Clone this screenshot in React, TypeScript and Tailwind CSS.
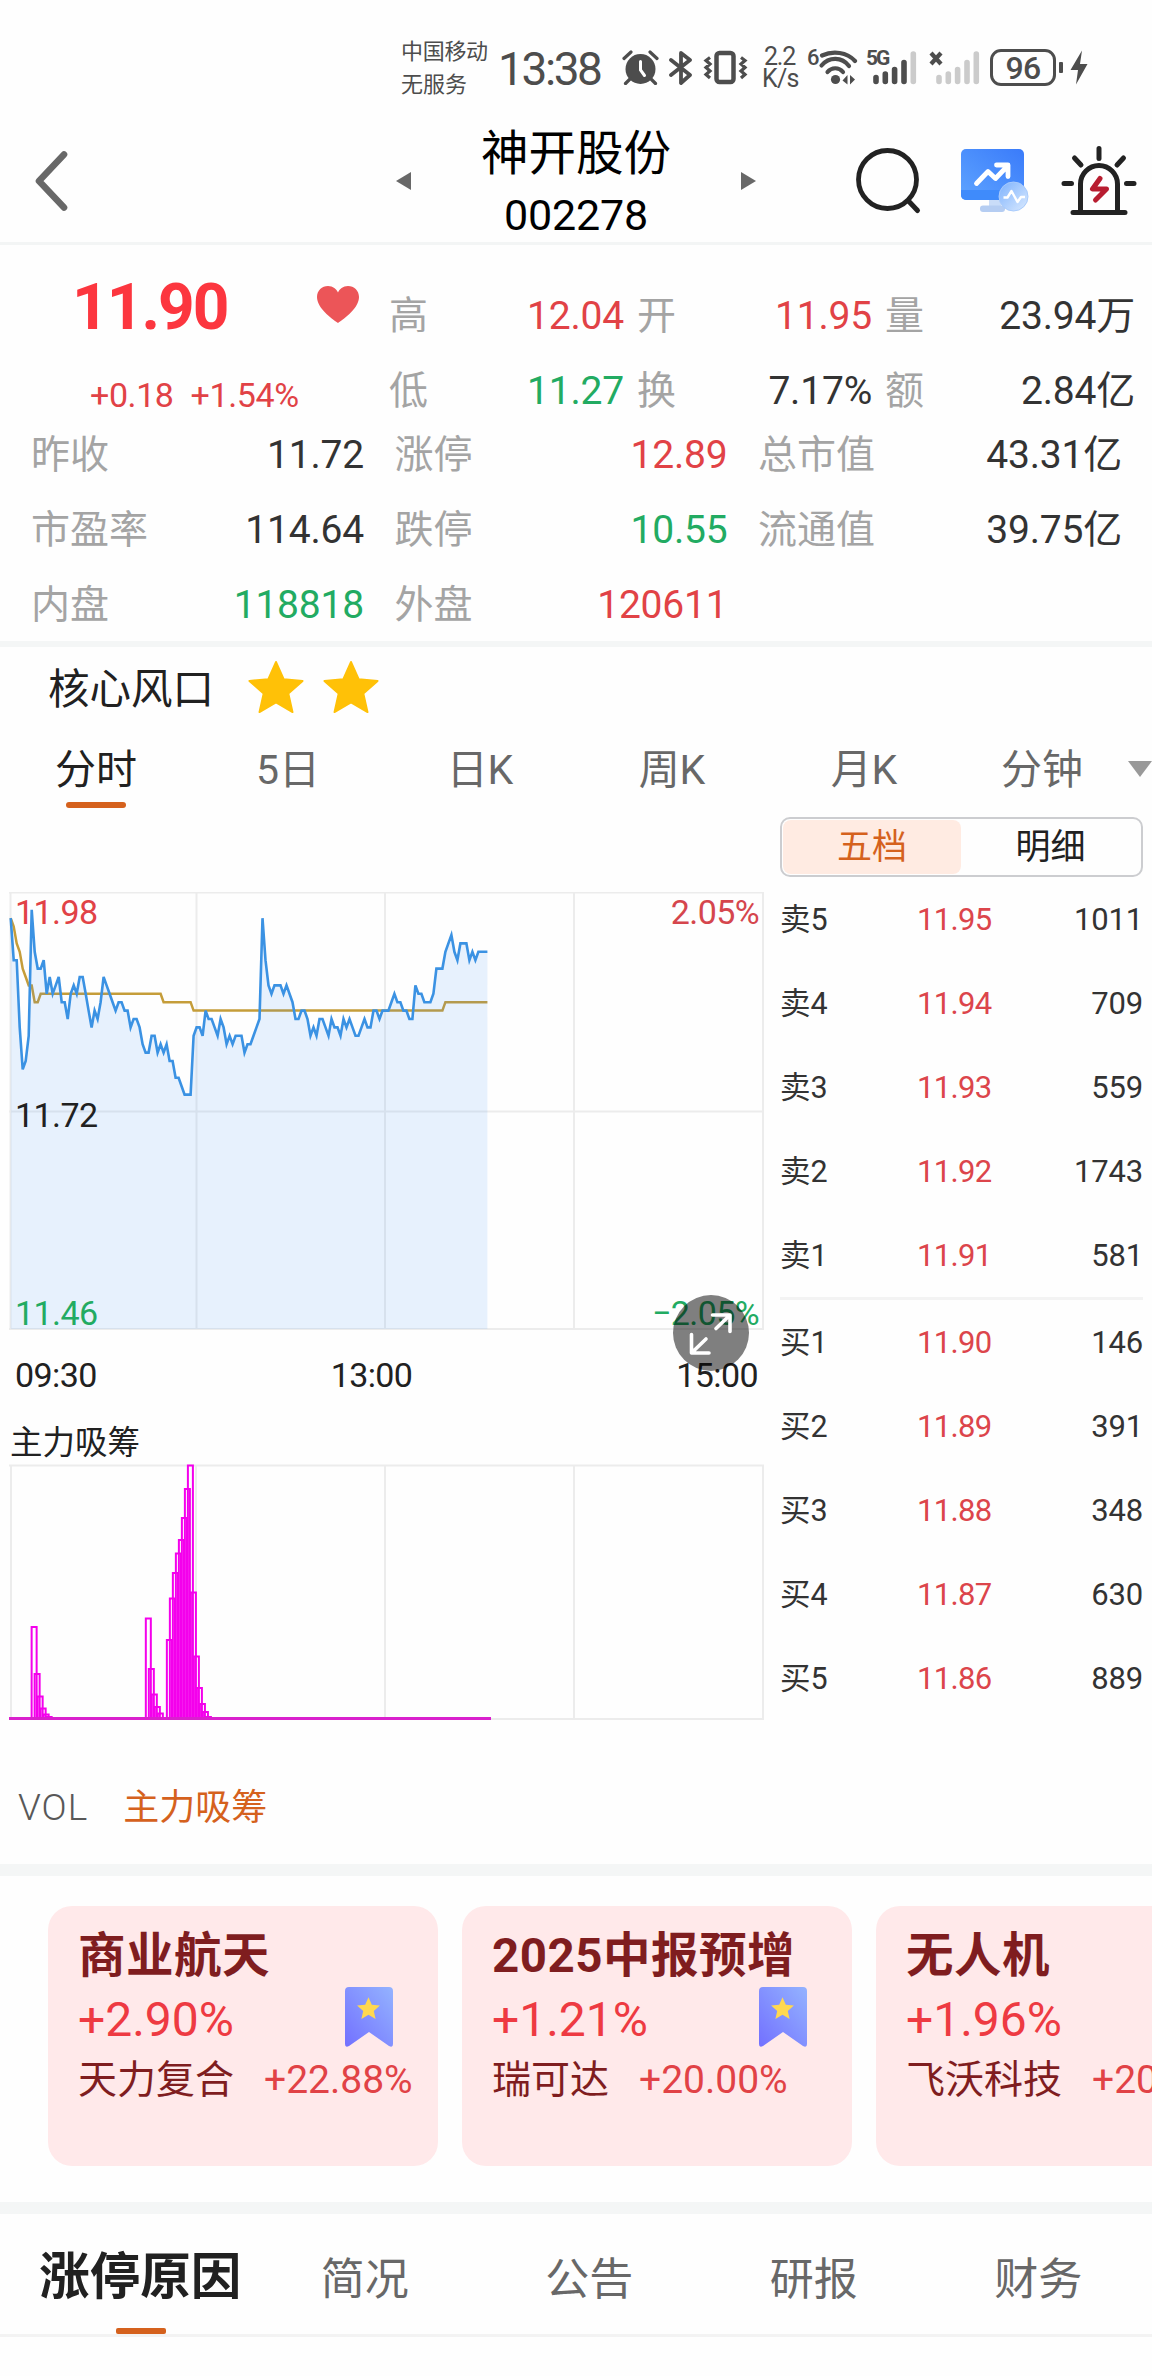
import { clsx } from 'clsx';

// ticks (0.01) below the upper limit of the chart, one entry per minute
const PRICE = [
  3, 8, 8, 16, 21, 20, 17, 2, 7, 9, 9, 8, 12, 10, 12, 11, 10, 13, 13, 15, 12, 11, 12, 10, 10, 12, 14, 16, 14, 15, 13, 10,
  11, 12, 13, 14, 13, 13, 14, 14, 16, 15, 15, 16, 18, 19, 19, 17, 17, 19, 18, 19, 18, 20, 20, 22, 22, 23, 24, 24, 24, 17,
  16, 16, 17, 14, 15, 15, 16, 17, 15, 16, 18, 17, 18, 17, 17, 17, 19, 18, 18, 17, 16, 15, 3, 8, 11, 12, 11, 11, 11, 12,
  11, 12, 13, 15, 15, 14, 14, 15, 17, 16, 17, 15, 15, 16, 17, 15, 16, 16, 17, 15, 16, 15, 16, 17, 17, 16, 15, 16, 16, 14,
  14, 15, 14, 14, 14, 13, 12, 13, 13, 14, 14, 15, 15, 11, 12, 12, 13, 13, 13, 12, 9, 9, 9, 7, 6, 5, 7, 8, 6, 6, 6, 8, 7,
  8, 7, 7, 7, 7,
];

// [minute, ticks]
const AVERAGE = [
  [0, 3], [1, 4], [2, 6], [3, 7], [4, 9], [5, 10], [6, 11], [7, 11], [8, 13], [9, 13], [10, 12],
  [50, 12], [51, 13], [60, 13], [61, 14], [144, 14], [145, 13], [159, 13],
];

const STEP = 2.998;
const px = (i: number) => 1.7 + i * STEP;
const py = (d: number) => 1 + d * 8.4;

// [minute, height]
const INFLOW = [
  [7, 92], [8, 45], [9, 22.5], [10, 10.5], [11, 4.5], [12, 2],
  [45, 100.5], [46, 50], [47, 24.5], [48, 12], [49, 5.5],
  [52, 79], [53, 120.5], [54, 146], [55, 165.5], [56, 179], [57, 201], [58, 230], [59, 253.5],
  [60, 126.5], [61, 62.5], [62, 31], [63, 15], [64, 7], [65, 2],
];

const topStats = [
  { label: '高', value: '12.04', color: 'text-[#e14246]' },
  { label: '开', value: '11.95', color: 'text-[#e14246]' },
  { label: '量', value: '23.94万', color: 'text-[#333333]' },
  { label: '低', value: '11.27', color: 'text-[#22ab62]' },
  { label: '换', value: '7.17%', color: 'text-[#333333]' },
  { label: '额', value: '2.84亿', color: 'text-[#333333]' },
];

const stats = [
  { label: '昨收', value: '11.72', color: 'text-[#333333]' },
  { label: '涨停', value: '12.89', color: 'text-[#e14246]' },
  { label: '总市值', value: '43.31亿', color: 'text-[#333333]' },
  { label: '市盈率', value: '114.64', color: 'text-[#333333]' },
  { label: '跌停', value: '10.55', color: 'text-[#22ab62]' },
  { label: '流通值', value: '39.75亿', color: 'text-[#333333]' },
  { label: '内盘', value: '118818', color: 'text-[#22ab62]' },
  { label: '外盘', value: '120611', color: 'text-[#e14246]' },
];

const asks = [
  ['卖5', '11.95', '1011'],
  ['卖4', '11.94', '709'],
  ['卖3', '11.93', '559'],
  ['卖2', '11.92', '1743'],
  ['卖1', '11.91', '581'],
];

const bids = [
  ['买1', '11.90', '146'],
  ['买2', '11.89', '391'],
  ['买3', '11.88', '348'],
  ['买4', '11.87', '630'],
  ['买5', '11.86', '889'],
];

const concepts = [
  { name: '商业航天', change: '+2.90%', stock: '天力复合', stockChange: '+22.88%' },
  { name: '2025中报预增', change: '+1.21%', stock: '瑞可达', stockChange: '+20.00%' },
  { name: '无人机', change: '+1.96%', stock: '飞沃科技', stockChange: '+20.00%' },
];

const STAR = 'M12 0.8l3.3 7.4 8.1.8-6.1 5.4 1.8 8L12 18.2l-7.1 4.2 1.8-8L.6 9l8.1-.8z';

const StatusBar = () => (
  <div className="flex h-[100px] text-[#4d4d4d]">
    <div className="ml-[401px] w-[97px] pt-[35px] text-[22px] leading-[33px]">
      <p className="tracking-[-0.3px]">中国移动</p>
      <p>无服务</p>
    </div>
    <div className="w-[124px] pt-[43px] text-[46px] leading-[52px] tracking-[-2.4px]">13:38</div>
    <svg className="mt-[50px] h-[35px] w-[37px]" viewBox="0 0 37 35">
      <circle cx="18.5" cy="19" r="15" fill="#4d4d4d" />
      <path d="M2 8.500L9 2M35 8.500L28 2M8 29l-4.500 4.500M29 29l4.500 4.500" stroke="#4d4d4d" strokeWidth="3.200" strokeLinecap="round" />
      <path d="M18.500 11.500v8.500l4 5.500" stroke="#fff" strokeWidth="3" fill="none" strokeLinecap="round" />
    </svg>
    <svg className="mt-[50px] ml-[9px] h-[35px] w-[26px]" viewBox="0 0 26 35" fill="none" stroke="#4d4d4d" strokeWidth="3.800" strokeLinejoin="round" strokeLinecap="round">
      <path d="M3 10l19 15-9 8V3l9 7L3 25" />
    </svg>
    <svg className="mt-[50px] ml-[9px] h-[35px] w-[46px]" viewBox="0 0 46 35" fill="none" stroke="#4d4d4d">
      <rect x="13.500" y="3" width="17" height="29" rx="3" strokeWidth="4.500" />
      <path d="M7 7.500L3 10.500 7 14 3 17.500 7 21 3 24.500 7 28M38 7.500l4 3-4 3.500 4 3.500-4 3.500 4 3.500-4 3.500" strokeWidth="3.200" />
    </svg>
    <div className="ml-[13px] w-[45px] pt-[46px] text-[25px] leading-[22px]">
      <p className="pl-[2px] tracking-[-1.2px]">2.2</p>
      <p className="tracking-[-0.8px]">K/s</p>
    </div>
    <span className="w-[11px] pt-[47px] text-[22px] leading-[21px] font-medium tracking-[-1px]">6</span>
    <svg className="mt-[50px] h-[36px] w-[40px]" viewBox="0 0 40 36" fill="none" stroke="#4d4d4d" strokeWidth="4.200" strokeLinecap="round">
      <path d="M4 5.500C15 .500 29 2 37 11" />
      <path d="M3.500 15.500C11 6.500 24 6.500 31 16" />
      <path d="M9.500 22C13.500 17 21 17 25 22" />
      <circle cx="17.500" cy="29.500" r="4.600" fill="#4d4d4d" stroke="none" />
      <path d="M29.500 25v9.500l-5-4zM32 34.500V25l5 4.500z" fill="#4d4d4d" stroke="none" />
    </svg>
    <span className="ml-[8px] w-[7px] pt-[48px] text-[21px] leading-[21px] font-bold tracking-[-2px]">5G</span>
    <svg className="mt-[50px] h-[35px] w-[44px]" viewBox="0 0 44 35" strokeWidth="5.600" strokeLinecap="round">
      <path d="M3 27.500v4M12.300 24v7.500M21.600 19.500v12M31 12.500v19" stroke="#4d4d4d" />
      <path d="M40.300 4v27.500" stroke="#cbcbcb" />
    </svg>
    <svg className="mt-[50px] ml-[12px] h-[35px] w-[51px]" viewBox="0 0 51 35" strokeWidth="5.600" strokeLinecap="round">
      <path d="M2 3l10 11M12 3L2 14" stroke="#4d4d4d" strokeWidth="4.200" strokeLinecap="butt" />
      <path d="M10 27.500v4M19.300 24v7.500M28.600 19.500v12M38 12.500v19M47.300 4v27.500" stroke="#cbcbcb" />
    </svg>
    <div className="mt-[49px] ml-[10px] flex h-[37px] w-[66px] items-center justify-center rounded-[11px] border-[3px] border-[#4d4d4d] text-[32px] leading-[32px] font-medium tracking-[-0.8px]">
      96
    </div>
    <div className="mt-[62px] ml-[3px] h-[11px] w-[4px] rounded-[1px] bg-[#4d4d4d]" />
    <svg className="mt-[50px] ml-[7px] h-[35px] w-[18px]" viewBox="0 0 18 35">
      <path d="M12 .500L.500 20H8l-2 14.500L17.500 14H10z" fill="#4d4d4d" />
    </svg>
  </div>
);

const NavBar = () => (
  <div className="flex h-[145px] border-b-[3px] border-[#f3f5f5]">
    <svg className="mt-[48px] ml-[33px] h-[66px] w-[38px]" viewBox="0 0 38 66">
      <path d="M31 6.500L6 33l25 26.500" fill="none" stroke="#686868" strokeWidth="6.600" strokeLinecap="round" strokeLinejoin="round" />
    </svg>
    <svg className="mt-[72px] ml-[325px] h-[18px] w-[15px]" viewBox="0 0 15 18">
      <path d="M15 0v18L0 9z" fill="#686868" />
    </svg>
    <div className="ml-[11px] w-[308px] pt-[23px] text-center text-black">
      <h1 className="text-[47.500px] leading-[62px]">神开股份</h1>
      <p className="text-[43px] leading-[60px] tracking-[-0.2px]">002278</p>
    </div>
    <svg className="mt-[72px] ml-[11px] h-[18px] w-[15px]" viewBox="0 0 15 18">
      <path d="M0 0v18l15-9z" fill="#686868" />
    </svg>
    <svg className="mt-[45px] ml-[97px] h-[70px] w-[70px]" viewBox="0 0 70 70" fill="none" stroke="#222" strokeLinecap="round">
      <circle cx="34.500" cy="34.500" r="29" strokeWidth="4.800" />
      <path d="M55.500 56l9 9.500" strokeWidth="5" />
    </svg>
    <svg className="mt-[47px] ml-[36px] h-[68px] w-[70px]" viewBox="0 0 70 68">
      <defs>
        <linearGradient id="screen" x1="0" y1="1" x2="1" y2="0">
          <stop offset="0" stopColor="#5ea4ff" />
          <stop offset="1" stopColor="#3a7bfa" />
        </linearGradient>
        <linearGradient id="bubble" x1="0" y1="0" x2="1" y2="1">
          <stop offset="0" stopColor="#7db2fd" />
          <stop offset="1" stopColor="#dbeafe" />
        </linearGradient>
      </defs>
      <path d="M30 52h12v9H30z" fill="#c9dcf8" />
      <rect x="21" y="58.500" width="25" height="6.500" rx="3" fill="#b5cdf2" />
      <rect x="2" y="2" width="63" height="51" rx="5" fill="url(#screen)" />
      <path d="M2 43h63v5a5 5 0 0 1-5 5H7a5 5 0 0 1-5-5z" fill="#3f8bfb" />
      <path d="M17.500 36.500l11.500-12 7.500 7L49 18.500M37.500 18H49v11.500" fill="none" stroke="#fff" strokeWidth="4.800" strokeLinejoin="round" strokeLinecap="round" />
      <circle cx="54.500" cy="49.500" r="14.500" fill="url(#bubble)" stroke="#a9cbfc" strokeWidth="1" />
      <path d="M44.500 50.500h4l4-6.500 6 11 3.500-5h4" fill="none" stroke="#fff" strokeWidth="2.400" strokeLinejoin="round" />
    </svg>
    <svg className="mt-[43px] ml-[32px] h-[74px] w-[76px]" viewBox="0 0 76 74" fill="none" stroke="#222" strokeWidth="5" strokeLinecap="round">
      <path d="M19.500 68V41a18.500 18.500 0 0 1 37 0v27" />
      <path d="M12 69.500h52M38 5.500v10M13.500 15l6.500 7M62.500 15L56 22M3 40.500h7.500M65.500 40.500H73" />
      <path d="M39 35.500l-7.500 10.500h14L34.500 57" stroke="#b81d30" strokeWidth="5" strokeLinejoin="round" />
    </svg>
  </div>
);

const StatCell = ({ label, value, color }: { label: string; value: string; color: string }) => (
  <div className="flex h-[50px] justify-between text-[39px] leading-[50px]">
    <span className="text-[#a4a4a4]">{label}</span>
    <span className={clsx('tracking-[-0.2px]', color)}>{value}</span>
  </div>
);

const Quote = () => (
  <section className="h-[402px] border-b-[6px] border-[#f4f6f6]">
    <div className="flex h-[171px]">
      <div className="w-[389px] pt-[29px]">
        <div className="flex">
          <p className="w-[242px] pl-[72px] text-[64px] leading-[68px] font-bold tracking-[-2px] text-[#fc363f]">11.90</p>
          <svg className="mt-[11px] ml-[74px] h-[39px] w-[44px]" viewBox="0 0 44 39">
            <path d="M22 38C15 33 1 23 1 12 1 5.500 6 1 12 1c5 0 8.500 3 10 6.500C23.500 4 27 1 32 1c6 0 11 4.500 11 11 0 11-14 21-21 26z" fill="#ec5558" />
          </svg>
        </div>
        <p className="flex gap-[17px] pt-[27px] pl-[90px] text-[34px] leading-[52px] tracking-[-0.4px] text-[#e14246]">
          <span>+0.18</span>
          <span>+1.54%</span>
        </p>
      </div>
      <div className="grid grid-cols-[235px_235px_250px] gap-x-[13px] gap-y-[25px] self-start pt-[46px]">
        {topStats.map((s) => (
          <StatCell key={s.label} {...s} />
        ))}
      </div>
    </div>
    <div className="mt-[14px] grid grid-cols-[333px_333px_364px] gap-x-[30.500px] gap-y-[25px] pl-[31px]">
      {stats.map((s) => (
        <StatCell key={s.label} {...s} />
      ))}
    </div>
  </section>
);

const CoreTheme = () => (
  <div className="flex h-[82px] pt-[13px] pl-[48px]">
    <span className="w-[200px] text-[41.500px] leading-[60px] text-[#212121]">核心风口</span>
    {[0, 1].map((i) => (
      <svg key={i} className="mr-[19px] h-[54px] w-[56px]" viewBox="0 0 24 23.200" preserveAspectRatio="none">
        <path d={STAR} fill="#ffc107" stroke="#ffc107" strokeWidth="0.800" strokeLinejoin="round" />
      </svg>
    ))}
  </div>
);

const PeriodTabs = () => (
  <div className="flex h-[88px] text-[41px] leading-[60px] text-[#686868]">
    <div className="flex w-[192px] flex-col items-center pt-[11px] text-[#212121]">
      <span>分时</span>
      <div className="mt-[2px] h-[6px] w-[60px] rounded-full bg-[#d5611d]" />
    </div>
    {['5日', '日K', '周K', '月K'].map((t) => (
      <div key={t} className="w-[192px] pt-[11px] text-center">{t}</div>
    ))}
    <div className="w-[168px] pt-[11px] pl-[41px]">分钟</div>
    <svg className="mt-[32px] h-[16px] w-[24px]" viewBox="0 0 24 16">
      <path d="M0 0h24L12 16z" fill="#999" />
    </svg>
  </div>
);

const PriceChart = () => {
  const line = PRICE.map((d, i) => `${px(i).toFixed(1)},${py(d).toFixed(1)}`).join(' ');
  const average = AVERAGE.map(([i, d]) => `${px(i).toFixed(1)},${py(d).toFixed(1)}`).join(' ');

  return (
    <div className="relative mt-[75px] ml-[9px] h-[438px] w-[756px] text-[34px] leading-[40px] tracking-[-0.6px]">
      <svg className="h-[438px] w-[756px]" viewBox="0 0 756 438" fill="none">
        <path d="M0 .500h755M0 219.500h755M0 437h755M1.500 0v437M187.500 0v437M376 0v437M565 0v437M754 0v437" stroke="#ececec" strokeWidth="2" />
        <polyline points={average} stroke="#c59d3a" strokeWidth="2.500" />
        <polygon points={`1.7,437 ${line} ${px(159)},437`} fill="#2b8cf5" fillOpacity="0.110" />
        <polyline points={line} stroke="#3b92e3" strokeWidth="2.600" />
      </svg>
      <span className="absolute top-0 left-[6px] text-[#e14246]">11.98</span>
      <span className="absolute top-0 right-[6px] text-[#d5464d]">2.05%</span>
      <span className="absolute top-[203px] left-[6px] text-[#212121]">11.72</span>
      <span className="absolute top-[401px] left-[6px] text-[#22ab62]">11.46</span>
      <span className="absolute top-[401px] right-[6px] text-[#22ab62]">−2.05%</span>
      <div className="absolute top-[403px] left-[664px] z-10 h-[76px] w-[76px] rounded-full bg-black/50">
        <svg className="h-[76px] w-[76px]" viewBox="0 0 76 76" fill="none" stroke="#fff" strokeWidth="3.600" strokeLinecap="round" strokeLinejoin="round">
          <path d="M39.500 20H57v16.500M56 21L43 33.500M18.500 39.500V58H36M19.500 57L33 44" />
        </svg>
      </div>
    </div>
  );
};

const InflowChart = () => (
  <svg className="ml-[9px] h-[258px] w-[756px]" viewBox="0 0 756 258" fill="none">
    <path d="M0 2.500h755M0 256h755M2 2v254M187 2v254M376 2v254M565 2v254M754 2v254" stroke="#ececec" strokeWidth="2" />
    {INFLOW.map(([i, h]) => (
      <rect key={i} x={1.6 + i * 3.005} y={256 - h} width="5" height={h} stroke="#f400ec" strokeWidth="2" />
    ))}
    <path d="M0 255.500h482" stroke="#d921cd" strokeWidth="2.800" />
  </svg>
);

const Levels = ({ rows }: { rows: string[][] }) => (
  <>
    {rows.map(([name, price, volume]) => (
      <div key={name} className="flex h-[84px] items-center pt-[2px] text-[31px] text-[#333333]">
        <span className="w-[137px] text-[30.500px]">{name}</span>
        <span className="w-[80px] tracking-[-0.7px] text-[#dc454b]">{price}</span>
        <span className="flex-1 text-right tracking-[-0.2px]">{volume}</span>
      </div>
    ))}
  </>
);

const OrderBook = () => (
  <div className="ml-[15px] w-[363px]">
    <div className="flex h-[60px] rounded-[10px] border-2 border-[#cccdd0] p-px text-[35px] leading-[56px]">
      <div className="w-[178px] rounded-lg bg-[#ffebe2] text-center text-[#d5611d]">五档</div>
      <div className="flex-1 text-center text-[#212121]">明细</div>
    </div>
    <Levels rows={asks} />
    <div className="h-[3px] bg-[#f3f3f3]" />
    <Levels rows={bids} />
  </div>
);

const ConceptCard = ({ name, change, stock, stockChange }: (typeof concepts)[number]) => (
  <div className="h-[260px] w-[390px] shrink-0 rounded-[24px] bg-[#ffe9ea] pt-[18px] pl-[30px] whitespace-nowrap">
    <h2 className="text-[47.500px] leading-[64px] font-bold tracking-[0.5px] text-[#7f1d1f]">{name}</h2>
    <div className="mt-px flex h-[60px] justify-between pr-[45px]">
      <span className="text-[48px] leading-[62px] text-[#ee3a42]">{change}</span>
      <svg className="-mt-[2px] h-[60px] w-[48px]" viewBox="0 0 48 60">
        <defs>
          <linearGradient id="ribbon" x1="1" y1="0" x2="0" y2="1">
            <stop offset="0" stopColor="#94b3ff" />
            <stop offset="1" stopColor="#7270ff" />
          </linearGradient>
        </defs>
        <path d="M4 0h40a4 4 0 0 1 4 4v53q0 4-4 2L24 45 4 59q-4 2-4-2V4a4 4 0 0 1 4-4z" fill="url(#ribbon)" />
        <path d={STAR} transform="translate(11.500 9.500)" fill="#ffd850" />
      </svg>
    </div>
    <div className="mt-[3px] flex gap-[30px] text-[39px] leading-[56px]">
      <span className="text-[#7f1d1f]">{stock}</span>
      <span className="text-[#e14246]">{stockChange}</span>
    </div>
  </div>
);

const InfoTabs = () => (
  <div className="flex h-[123px] border-b-[3px] border-[#f3f3f3] pl-[28px] text-[44px] leading-[64px] text-[#686868]">
    {['涨停原因', '简况', '公告', '研报', '财务'].map((t, i) => (
      <div
        key={t}
        className={clsx(
          'flex w-[224.500px] shrink-0 flex-col items-center whitespace-nowrap',
          i === 0 ? 'pt-[31px] text-[50.500px] font-bold text-[#212121]' : 'pt-[34px]',
        )}
      >
        <span>{t}</span>
        {i === 0 && <div className="mt-[19px] ml-[2px] h-[6px] w-[50px] rounded-[2px] bg-[#d5611d]" />}
      </div>
    ))}
  </div>
);

export default function App() {
  return (
    <div className="h-[2376px] w-[1152px] overflow-hidden bg-[#fefefe] font-['Roboto','Noto_Sans_CJK_SC',sans-serif]">
      <StatusBar />
      <NavBar />
      <Quote />
      <CoreTheme />
      <PeriodTabs />
      <div className="flex h-[1047px]">
        <div className="w-[765px]">
          <PriceChart />
          <div className="flex h-[92px] justify-between pt-[25px] pr-[7px] pl-[15px] text-[34px] leading-[40px] tracking-[-0.6px] text-[#212121]">
            <span>09:30</span>
            <span className="pr-[30px]">13:00</span>
            <span>15:00</span>
          </div>
          <p className="h-[41px] pl-[10px] text-[32.500px] leading-[43px] text-[#212121]">主力吸筹</p>
          <InflowChart />
          <div className="flex gap-[35px] pt-[60px] pl-[18px] text-[36px] leading-[54px]">
            <span className="text-[37px] font-light tracking-[1px] text-[#585858]">VOL</span>
            <span className="text-[#d5611d]">主力吸筹</span>
          </div>
        </div>
        <OrderBook />
      </div>
      <div className="h-[12px] bg-[#f4f6f6]" />
      <div className="flex gap-[24px] overflow-hidden pt-[30px] pb-[36px] pl-[48px]">
        {concepts.map((c) => (
          <ConceptCard key={c.name} {...c} />
        ))}
      </div>
      <div className="h-[12px] bg-[#f4f6f6]" />
      <InfoTabs />
    </div>
  );
}
